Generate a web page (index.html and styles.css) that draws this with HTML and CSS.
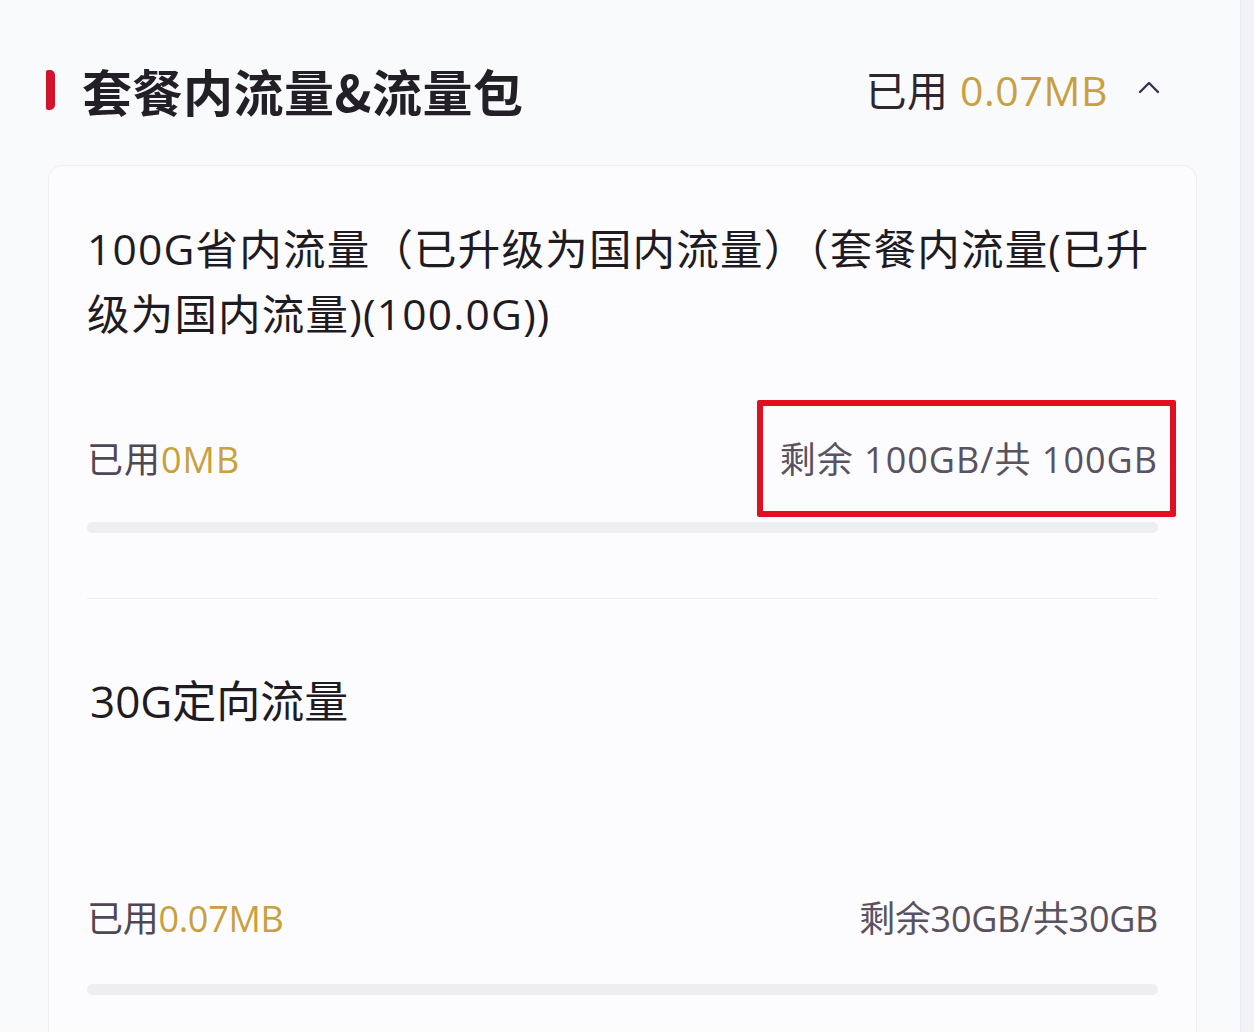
FILE: index.html
```html
<!DOCTYPE html>
<html lang="zh-CN">
<head>
<meta charset="utf-8">
<title>套餐内流量&amp;流量包</title>
<link rel="stylesheet" href="styles.css">
</head>
<body>
<div class="page">
  <div class="header">
    <div class="title-wrap">
      <span class="mark"></span>
      <h1 class="title">套餐内流量&amp;流量包</h1>
    </div>
    <div class="summary">
      <span class="label">已用 </span><span class="gold">0.07MB</span>
      <svg class="chevron" width="22" height="14" viewBox="0 0 22 14"><path d="M2 12 L11 3 L20 12" fill="none" stroke="#3b2f4a" stroke-width="2.4" stroke-linecap="round" stroke-linejoin="round"/></svg>
    </div>
  </div>
  <div class="card">
    <div class="item first">
      <div class="item-title">100G省内流量（已升级为国内流量）（套餐内流量(已升级为国内流量)(100.0G))</div>
      <div class="usage">
        <span class="used">已用<span class="gold">0MB</span></span>
        <span class="remain boxed">剩余 100GB/共 100GB</span>
      </div>
      <div class="bar"></div>
    </div>
    <div class="divider"></div>
    <div class="item second">
      <div class="item-title">30G定向流量</div>
      <div class="usage usage-2">
        <span class="used">已用<span class="gold">0.07MB</span></span>
        <span class="remain">剩余30GB/共30GB</span>
      </div>
      <div class="bar"></div>
    </div>
  </div>
</div>
</body>
</html>
```
FILE: styles.css
```css
html, body {
  margin: 0;
  padding: 0;
}
body {
  background: #f2f3f6;
  font-family: "Open Sans", "Noto Sans CJK SC", sans-serif;
  color: #222;
  overflow: hidden;
}
.page {
  width: 1240px;
  height: 1032px;
  background: #f9fafc;
  border-right: 1px solid #e9ebef;
  overflow: hidden;
}
.header {
  display: flex;
  align-items: center;
  justify-content: space-between;
  height: 60px;
  padding: 60px 80px 0 46px;
}
.title-wrap {
  display: flex;
  align-items: center;
}
.mark {
  width: 9px;
  height: 40px;
  background: #d3132b;
  border-radius: 2px 5px 5px 2px;
  margin-right: 27px;
}
.title {
  margin: 0;
  font-family: "Noto Sans CJK SC", sans-serif;
  font-size: 50px;
  font-weight: 700;
  color: #231f26;
  line-height: 60px;
  letter-spacing: 0.5px;
}
.summary {
  display: flex;
  align-items: center;
  font-size: 41px;
  line-height: 60px;
  color: #2b2630;
  white-space: pre;
  letter-spacing: 0.6px;
}
.gold {
  color: #c9a03f;
}
.chevron {
  margin-left: 30px;
  margin-top: -6px;
}
.card {
  margin: 45px 0 0 48px;
  width: 1149px;
  height: 900px;
  box-sizing: border-box;
  background: #fcfcfe;
  border: 1px solid #eceef2;
  border-radius: 14px;
  padding: 50px 38px 0 38px;
}
.item-title {
  font-size: 42.5px;
  line-height: 65px;
  color: #1f1b22;
  letter-spacing: 1.2px;
}
.usage {
  display: flex;
  justify-content: space-between;
  align-items: center;
  margin-top: 89px;
  font-size: 36px;
  line-height: 50px;
  letter-spacing: 1px;
}
.usage-2 {
  margin-top: 161px;
  letter-spacing: -0.3px;
}
.used {
  color: #4f4756;
}
.remain {
  color: #5a5260;
}
.boxed {
  position: relative;
}
.boxed::after {
  content: "";
  position: absolute;
  left: -23px;
  right: -18px;
  top: -35px;
  bottom: -32px;
  border: 6px solid #df1020;
  border-radius: 2px;
}
.bar {
  height: 11px;
  margin-top: 37px;
  background: #eceef1;
  border-radius: 6px;
}
.second .bar {
  margin-top: 40px;
}
.divider {
  height: 1px;
  background: #eef0f3;
  margin-top: 65px;
}
.second {
  padding-top: 70px;
}
.second .item-title {
  font-size: 44px;
  line-height: 64px;
  letter-spacing: 0;
  padding-left: 3px;
}
```
